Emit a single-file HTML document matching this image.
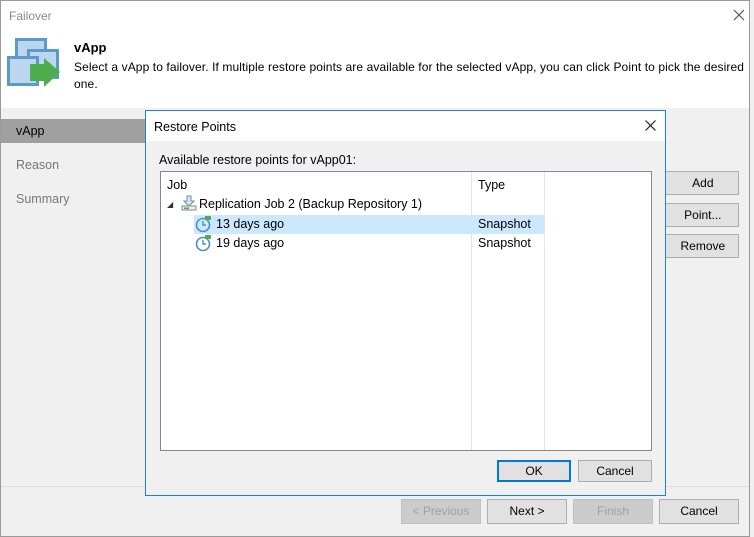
<!DOCTYPE html>
<html><head><style>
*{box-sizing:border-box;margin:0;padding:0}
body{width:754px;height:537px;overflow:hidden;font-family:"Liberation Sans",sans-serif;font-size:12px;color:#000;background:#f0f0f0;position:relative}
.a{position:absolute}
.btn{position:absolute;background:#e1e1e1;border:1px solid #adadad;text-align:center;font-size:12px;line-height:22px}
</style></head><body>
<div class="a" style="left:0;top:0;width:750px;height:537px;border:1px solid #9a9a9a"></div>
<div class="a" style="left:1px;top:1px;width:748px;height:107px;background:#fff"></div>
<div class="a" style="left:9px;top:9px;color:#8a8a8a;font-size:12px">Failover</div>
<svg class="a" style="left:733px;top:9px" width="12" height="12"><path d="M1 1L11 11M11 1L1 11" stroke="#555" stroke-width="1.2"/></svg>
<svg class="a" style="left:6px;top:36px" width="56" height="54">
<rect x="9" y="2" width="32" height="32" fill="#5b9bc8"/><rect x="12" y="5" width="26" height="26" fill="#bcd6ef"/>
<rect x="21" y="13" width="32" height="30" fill="#5b9bc8"/><rect x="24" y="16" width="26" height="24" fill="#bcd6ef"/>
<rect x="1" y="20" width="32" height="30" fill="#5b9bc8"/><rect x="4" y="23" width="26" height="24" fill="#bcd6ef"/>
<polygon points="24,28 38,28 38,22 54,36 38,51 38,45 24,45" fill="#4cae4c"/>
</svg>
<div class="a" style="left:74px;top:40px;font-weight:bold;font-size:13px">vApp</div>
<div class="a" style="left:74px;top:59px;font-size:12px;letter-spacing:0.1px;line-height:17px;width:680px;white-space:nowrap">Select a vApp to failover. If multiple restore points are available for the selected vApp, you can click Point to pick the desired<br>one.</div>
<div class="a" style="left:1px;top:119px;width:145px;height:24px;background:#a0a0a0"></div>
<div class="a" style="left:16px;top:124px;font-size:12.5px">vApp</div>
<div class="a" style="left:16px;top:158px;font-size:12.5px;color:#777">Reason</div>
<div class="a" style="left:16px;top:192px;font-size:12.5px;color:#777">Summary</div>
<div class="btn" style="left:660px;top:171px;width:79px;height:24px">&nbsp;&nbsp;Add</div>
<div class="btn" style="left:660px;top:203px;width:79px;height:24px">&nbsp;&nbsp;Point...</div>
<div class="btn" style="left:660px;top:234px;width:79px;height:24px">&nbsp;&nbsp;Remove</div>
<div class="a" style="left:1px;top:486px;width:748px;height:1px;background:#dcdcdc"></div>
<div class="btn" style="left:401px;top:499px;width:80px;height:25px;color:#a0a0a0;background:#ccc;border-color:#c0c0c0">&lt; Previous</div>
<div class="btn" style="left:487px;top:499px;width:80px;height:25px">Next &gt;</div>
<div class="btn" style="left:573px;top:499px;width:80px;height:25px;color:#a0a0a0;background:#ccc;border-color:#c0c0c0">Finish</div>
<div class="btn" style="left:659px;top:499px;width:80px;height:25px">Cancel</div>
<!-- dialog -->
<div class="a" style="left:145px;top:110px;width:521px;height:386px;border:1px solid #1883d7;background:#f0f0f0">
<div class="a" style="left:0;top:0;width:519px;height:30px;background:#fff"></div>
<div class="a" style="left:8px;top:9px;font-size:12.5px">Restore Points</div>
<svg class="a" style="left:499px;top:9px" width="11" height="11"><path d="M0.5 0.5L10.5 10.5M10.5 0.5L0.5 10.5" stroke="#222" stroke-width="1.2"/></svg>
<div class="a" style="left:13px;top:42px;font-size:12.5px">Available restore points for vApp01:</div>
<div class="a" style="left:14px;top:60px;width:492px;height:280px;background:#fff;border:1px solid #828790">
<div class="a" style="left:310px;top:0;width:1px;height:278px;background:#e5e5e5"></div>
<div class="a" style="left:383px;top:0;width:1px;height:278px;background:#e5e5e5"></div>
<div class="a" style="left:6px;top:6px;font-size:12.5px">Job</div>
<div class="a" style="left:317px;top:6px;font-size:12.5px">Type</div>
<div class="a" style="left:6px;top:28px;font-size:8px;color:#333">◢</div>
<svg class="a" style="left:20px;top:23px" width="16" height="16"><path d="M6 1h4v5h3l-5 5-5-5h3z" fill="#dbe8f3" stroke="#6b8fae"/><rect x="1" y="11" width="14" height="4" fill="#eee" stroke="#888"/><rect x="3" y="12.5" width="5" height="1.5" fill="#4cae4c"/></svg>
<div class="a" style="left:38px;top:25px;font-size:12.5px">Replication Job 2 (Backup Repository 1)</div>
<div class="a" style="left:33px;top:43px;width:351px;height:19px;background:#cce8ff"></div>
<svg class="a" style="left:34px;top:43px" width="18" height="18"><circle cx="8" cy="10" r="6.5" fill="none" stroke="#4a90c8" stroke-width="1.6"/><path d="M8 6v4h3" fill="none" stroke="#4a90c8" stroke-width="1.4"/><path d="M10 1h6v4h-6z" fill="#4cae4c"/></svg>
<div class="a" style="left:55px;top:45px;font-size:12.5px">13 days ago</div>
<div class="a" style="left:317px;top:45px;font-size:12.5px">Snapshot</div>
<svg class="a" style="left:34px;top:62px" width="18" height="18"><circle cx="8" cy="10" r="6.5" fill="none" stroke="#4a90c8" stroke-width="1.6"/><path d="M8 6v4h3" fill="none" stroke="#4a90c8" stroke-width="1.4"/><path d="M10 1h6v4h-6z" fill="#4cae4c"/></svg>
<div class="a" style="left:55px;top:64px;font-size:12.5px">19 days ago</div>
<div class="a" style="left:317px;top:64px;font-size:12.5px">Snapshot</div>
</div>
<div class="btn" style="left:351px;top:349px;width:74px;height:22px;border:2px solid #0078d7;line-height:18px">OK</div>
<div class="btn" style="left:432px;top:349px;width:74px;height:22px;line-height:20px">Cancel</div>
</div>
</body></html>
